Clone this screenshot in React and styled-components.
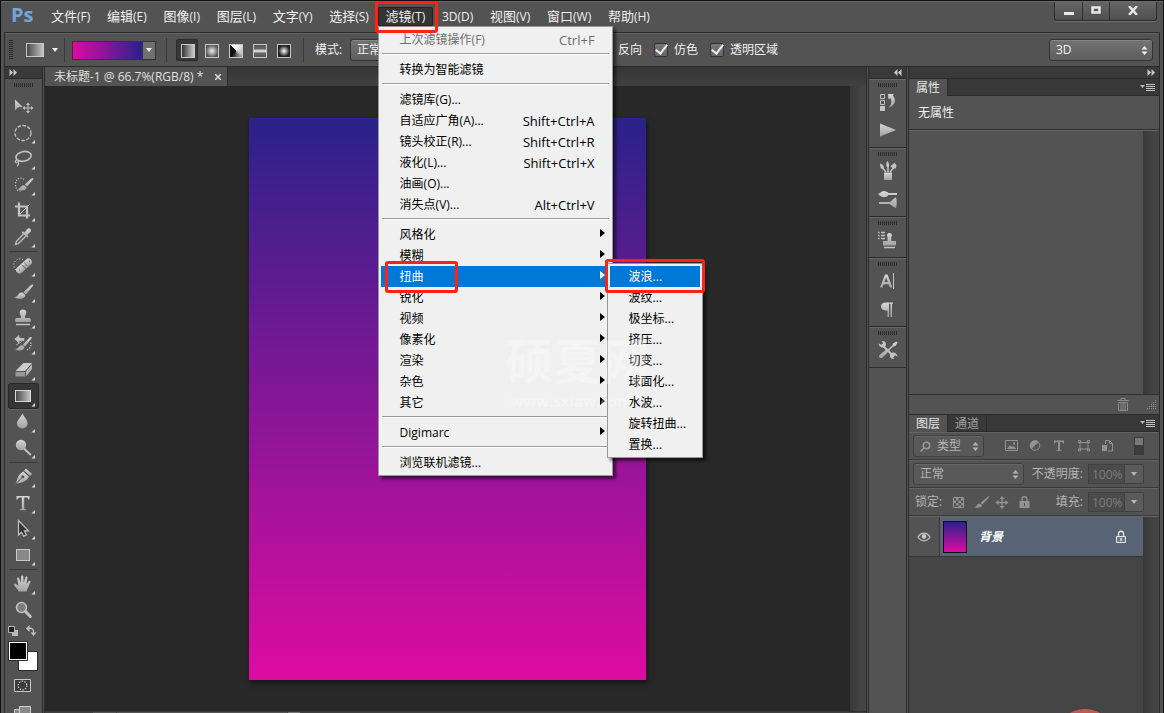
import styled, { createGlobalStyle, css } from "styled-components"

const GlobalStyle = createGlobalStyle`
    * {
        box-sizing: border-box;
    }
    body {
        margin: 0;
        background: #535353;
        overflow: hidden;
    }
    body, button, input, select {
        font-family: "Open Sans", "Noto Sans CJK SC", sans-serif;
        font-size: 12px;
        line-height: 16px;
    }
    button {
        border: 0;
        padding: 0;
        background: none;
        color: inherit;
    }
    svg {
        display: block;
    }
`

const MENUS = [
    ["文件", "(F)"], ["编辑", "(E)"], ["图像", "(I)"], ["图层", "(L)"], ["文字", "(Y)"], ["选择", "(S)"],
    ["滤镜", "(T)"], ["", "3D(D)"], ["视图", "(V)"], ["窗口", "(W)"], ["帮助", "(H)"],
]

const FILTER_MENU = [
    [{ label: "上次滤镜操作(F)", keys: "Ctrl+F", off: true }],
    [{ label: "转换为智能滤镜" }],
    [
        { label: "滤镜库(G)..." },
        { label: "自适应广角(A)...", keys: "Shift+Ctrl+A" },
        { label: "镜头校正(R)...", keys: "Shift+Ctrl+R" },
        { label: "液化(L)...", keys: "Shift+Ctrl+X" },
        { label: "油画(O)..." },
        { label: "消失点(V)...", keys: "Alt+Ctrl+V" },
    ],
    ["风格化", "模糊", "扭曲", "锐化", "视频", "像素化", "渲染", "杂色", "其它"].map((label) => ({ label, sub: true })),
    [{ label: "Digimarc", sub: true }],
    [{ label: "浏览联机滤镜..." }],
]

const DISTORT = ["波浪...", "波纹...", "极坐标...", "挤压...", "切变...", "球面化...", "水波...", "旋转扭曲...", "置换..."]

const TOOLS = [
    ["move", "marquee", "lasso", "quick", "crop", "dropper"],
    ["heal", "brush", "stamp", "history", "eraser", "gradient", "blur", "dodge"],
    ["pen", "type", "select", "rect"],
    ["hand", "zoom"],
]

const DOCK = [["historyPanel", "play"], ["brushes", "brushPresets"], ["cloneSource"], ["character", "paragraph"], ["toolPresets"]]

const GRADIENT_STYLES = [
    "linear-gradient(90deg, #333, #ccc)",
    "radial-gradient(#eee, #555 75%)",
    "conic-gradient(from -45deg, #fff 10%, #bbb 45%, #111 75%)",
    "linear-gradient(#555, #666 30%, #eee 50%, #666 70%, #555)",
    "radial-gradient(#fff, #222 65%)",
]

const M = "url(#metal)"
const C = "#c2c2c2"

const icons = {
    move: (
        <>
            <path d="M4 4.500v11l3.200-3.200 4.800-.3z" fill={M} />
            <path d="M17 8.500v9M12.500 13h9" stroke={C} />
            <path d="M17 7.500l2 2.500h-4zM17 18.500l2-2.500h-4zM11.500 13l2.500-2v4zM22.500 13l-2.500-2v4z" fill={C} />
        </>
    ),
    marquee: <ellipse cx="12" cy="12" rx="8" ry="7.500" fill="none" stroke={C} strokeWidth="1.300" strokeDasharray="3.600 1.500" />,
    lasso: (
        <>
            <ellipse cx="12.500" cy="9.500" rx="7.700" ry="4.800" transform="rotate(-12 12 9)" fill="none" stroke={C} strokeWidth="1.600" />
            <path d="M6 13.500c-1.500-.5-2.500 1-1 2 2 .8 3-.8 1.500-1.800M7 15.500c1.500 1 0 3-1 3.500" fill="none" stroke={C} strokeWidth="1.200" />
        </>
    ),
    quick: (
        <>
            <path d="M13 6.500C10 3.500 4.500 5.500 4.500 11.500c0 4 2 6.500 5 6.500" fill="none" stroke={C} strokeWidth="1.200" strokeDasharray="1.200 1.400" />
            <path d="M21.500 5c1 .3 1.200 1 .6 1.500l-6 7-2.400-2 6-5.600zM13 12.300l2.500 2c0 2.500-2.500 3.200-4.500 3.200-1.500 0-3-.4-4-1.500 2.500-.5 3-4 6-3.700z" fill={M} />
        </>
    ),
    crop: (
        <>
            <path d="M8 3.500v13h11M4 7.500h12v12" fill="none" stroke={C} strokeWidth="2.200" />
            <path d="M8.500 15.500L18.500 5.500" stroke={C} />
        </>
    ),
    dropper: (
        <>
            <path d="M12.500 9l-7 7.300-1 3.200 3-1 7.200-7.200" fill="none" stroke={C} strokeWidth="1.300" />
            <path d="M10.500 7.500l1.300-1.300 1.500 1.200 3-3.400c2-2 5 .8 3.200 2.900l-3.200 3.100 1.300 1.500-1.300 1.300z" fill={M} />
        </>
    ),
    heal: (
        <>
            <path d="M12 5.500C8.500 3.500 3 6 2.800 10.500c0 3 1 5 2.700 6" fill="none" stroke={C} strokeDasharray="1.200 1.600" />
            <rect x="3.500" y="8.500" width="19" height="7" rx="3.500" transform="rotate(-42 13 12)" fill={M} />
            <path d="M10.500 11l4.500 4M13 8.500l4.500 4.200" stroke="#777" />
            <path d="M12.500 12h1M14.500 11h1M13.500 13.500h1M18 7.500h1M8 16h1" stroke="#666" />
        </>
    ),
    brush: (
        <>
            <path d="M21.500 4.500c.8.2.9.8.4 1.500l-7 8.500-2.600-2.200 7.800-7.400z" fill={M} />
            <path d="M11.800 12.800l2.500 2.200c0 2.500-2.500 3.800-5.300 3.800-2.200 0-4.200-.5-5.700-1.800 2.500-.2 3-1.200 4-2.500 1-1.400 2.700-2.400 4.500-1.700z" fill={M} />
        </>
    ),
    stamp: (
        <>
            <path d="M12 3.500c2.200 0 3.500 1.400 3.300 3.200-.2 2-1.500 2.600-1.300 5.300h4c1.200 0 1.700.6 1.700 1.500V16H4.300v-2.500c0-.9.500-1.500 1.700-1.500h4c.2-2.700-1.100-3.300-1.300-5.300C8.500 4.900 9.800 3.500 12 3.500z" fill={M} />
            <path d="M5 18.500h14" stroke={C} strokeWidth="1.500" />
        </>
    ),
    history: (
        <>
            <path d="M20 5c.9.200 1 .9.500 1.500l-6.500 8-2.200-1.800 7-7.400zM11.200 13.200l2.300 1.900c0 2.400-2.300 3.400-4.700 3.400-1.800 0-3.500-.4-4.600-1.500 4-.6 3.500-4 7-3.800z" fill={M} />
            <path d="M4 7.500c2-1.500 4-1.500 6.500-.5" fill="none" stroke={C} strokeWidth="1.800" />
            <path d="M4 7l4-3.500v3h5v2H8v2.500zM5 13l6-3.500" stroke={C} fill={C} strokeWidth=".8" />
            <path d="M19.500 10.500c1.500 3-.5 6.500-4 7.500" fill="none" stroke={C} strokeDasharray="1.300 1.300" strokeWidth="1.300" />
        </>
    ),
    eraser: (
        <>
            <path d="M12.500 5h8.500l-7 8H4.500z" fill="#ccc" />
            <path d="M4.500 14H14v4.500H4.500z" fill="#999" />
            <path d="M15 13.500l6-7.500v5l-6 7.500z" fill="#b5b5b5" />
        </>
    ),
    gradient: <rect x="4.500" y="6.500" width="15" height="11" fill="url(#ramp)" stroke="#d8d8d8" />,
    blur: <path d="M11.500 3.500c1.600 3.600 5 6.400 5 9.800 0 3-2.200 5.200-5.200 5.200s-5.200-2.200-5.200-5.200c0-3.400 3.800-6.200 5.400-9.800z" fill={M} />,
    dodge: (
        <>
            <circle cx="10" cy="9" r="5.200" fill={M} />
            <path d="M13.500 13l5.800 5.500" stroke={C} strokeWidth="2" strokeLinecap="round" />
        </>
    ),
    pen: (
        <>
            <path d="M15 3.500l6 5.500-2 2-6-5.500z" fill={M} />
            <path d="M12.300 6.500l5.700 5.300c-2 3.500-5 5.700-13.500 7.200C6.500 13.500 7 9.500 12.300 6.500z" fill={M} />
            <path d="M4.500 19l6.500-6.500" stroke="#555" />
            <circle cx="11.800" cy="11.800" r="1.500" fill="#555" />
        </>
    ),
    type: <path d="M5.500 5h13v3.500h-1.200c-.3-1.600-.9-2.100-2.600-2.100h-1.500V17c0 1 .4 1.300 1.800 1.300v.9H9v-.9c1.400 0 1.800-.3 1.800-1.300V6.400H9.300c-1.700 0-2.300.5-2.600 2.100H5.500z" fill={M} />,
    select: <path d="M7.500 3.500v14.500l3-2.800 2.200 4 2.700-1.300-2-4h4.100z" fill="#333" stroke={C} strokeWidth="1.200" />,
    rect: <rect x="5.500" y="6.500" width="13" height="11" fill="#888" stroke="#c8c8c8" />,
    hand: <path d="M7.500 19.500c-.3-2.300-3.700-4.700-4.300-6.500-.2-1 1-1.500 1.800-1l2.500 1.800L6.200 7c-.2-1.500 1.500-2 2-.6l1.500 4.300.5-6.200c.1-1.400 2-1.400 2.100 0l.4 6.200 1.700-5.400c.5-1.300 2.200-.8 2 .6L15.500 12l2.200-2.700c.9-1 2.400-.2 1.700 1-1.300 2.200-1.500 4-2.500 6-.6 1.200-1 2-1.100 3.200z" fill={M} />,
    zoom: (
        <>
            <circle cx="10.500" cy="9.500" r="5" fill="#7d7d7d" stroke={C} strokeWidth="1.500" />
            <path d="M14.500 13.500l4.800 5" stroke={C} strokeWidth="3" strokeLinecap="round" />
        </>
    ),
    historyPanel: (
        <>
            <path d="M4.500 4.500h4v4h-4zM4.500 10.500h4v4h-4z" fill="none" stroke={C} />
            <path d="M4 16h5v5H4z" fill={C} />
            <path d="M12 4h6l-1.200 1.500c3.500 3.500 3 9.500-4.300 12.500 3.500-4 3.500-7 1.700-10L12.500 9.500z" fill={M} />
        </>
    ),
    play: <path d="M4 5.500v13l16-6.500z" fill={M} />,
    brushes: (
        <>
            <path d="M8 13.500h8V21H8z" fill={M} />
            <path d="M10 13L6.500 9M12 13V6M14 13l4-4.500" stroke={C} strokeWidth="1.500" />
            <path d="M4 4.500c3 .5 4 2.500 4 5L5.500 10C4.500 8.500 4 7 4 4.500zM11.500 2c1.500 1.500 2 4 1.300 6h-2c-1-2-.7-4.500.7-6zM14.500 7l4-3c2 1 2.300 3 1.500 5-1.500 1-3.500.8-5.500-2z" fill={C} />
        </>
    ),
    brushPresets: (
        <path d="M2 7c2 0 2.500-3 6-3 2 0 3.500 1 4.500 2H21v2h-8.500c-3 3.500-7.500 2.500-10.500-1zM3 15h10.500c1.500 0 3-3 6.500-4.500 1 3 1 7.500 0 10.500-3.500-1-5-3.500-6.500-4H3z" fill={M} />
    ),
    cloneSource: (
        <>
            <path d="M2 4.500h1.500M5 4.500h4M2 7.500h1.500M5 7.500h4M2 10.500h1.500M5 10.500h4" stroke={C} strokeWidth="1.500" />
            <path d="M13.500 5c2.500 0 3 2.500 1.800 4.300V13H20v4.500H7V13h4.500V9.300C10.500 7.500 11 5 13.500 5z" fill={M} />
            <path d="M8 19.500h11" stroke={C} strokeWidth="1.500" />
        </>
    ),
    character: (
        <>
            <path d="M4 18.500L9 5.500h2.500l5 13h-2.700l-1.200-3.300H7.800L6.600 18.500zM8.500 13h3.300l-1.600-4.700z" fill={M} />
            <path d="M17.500 4v16" stroke={C} />
        </>
    ),
    paragraph: <path d="M10 5.500h7v1.300h-1V20h-1.500V6.800h-1.500V20h-1.500v-6.500c-4 .2-6.500-1.400-6.500-4 0-2.500 2-4 5-4z" fill={M} />,
    toolPresets: (
        <>
            <path d="M6.500 7.500L18 18.500" stroke={C} strokeWidth="2.200" />
            <path d="M2.500 5.500l2.800 1.300L7 5.500 6 3c2.500-.5 4.500 1.500 4 4-.5 2-3 3-5 2-1.500-.5-2.300-2-2.500-3.500zM21.500 18.500l-2.800-1.300-1.700 1.300 1 2.500c-2.500.5-4.500-1.500-4-4 .5-2 3-3 5-2 1.500.5 2.300 2 2.500 3.500z" fill={C} />
            <path d="M20 5L5.500 18.500" stroke={C} strokeWidth="1.500" />
            <path d="M17 5.500l3.500-2 1 1-2 3.500-2 .5-1-1zM11.500 10.500l2 2-7 7c-2 1.500-4.500-.5-3-2.500z" fill={M} />
        </>
    ),
}

function Icon({ name, corner }) {
    return (
        <svg width="24" height="24" viewBox="0 0 24 24" fill="none" aria-hidden="true">
            {icons[name]}
            {corner && <path d="M24 19v3.500h-3.500z" fill="#ddd" />}
        </svg>
    )
}

function Chevrons({ left }) {
    return (
        <svg width="8" height="7" viewBox="0 0 8 7" fill="#c8c8c8" aria-hidden="true">
            {left ? <path d="M3.500 0v7L0 3.500zM7.500 0v7L4 3.500z" /> : <path d="M.5 0v7L4 3.500zM4.500 0v7L8 3.500z" />}
        </svg>
    )
}

function Arrows() {
    return (
        <svg width="7" height="9" viewBox="0 0 7 9" fill="currentColor" aria-hidden="true">
            <path d="M.5 3.500h6L3.500 0zM.5 5.500h6l-3 3.500z" />
        </svg>
    )
}

function DownArrow() {
    return (
        <svg width="6" height="4" viewBox="0 0 6 4" fill="currentColor" aria-hidden="true">
            <path d="M0 0h6L3 4z" />
        </svg>
    )
}

function FlyoutIcon() {
    return (
        <svg width="15" height="9" viewBox="0 0 15 9" aria-hidden="true">
            <path d="M0 2h5L2.500 5z" fill="#bbb" />
            <path d="M6 1.500h9M6 3.500h9M6 5.500h9M6 7.500h9" stroke="#c4c4c4" />
        </svg>
    )
}

function LockIcon() {
    return (
        <svg width="12" height="14" viewBox="0 0 12 14" aria-hidden="true">
            <path d="M3.500 6V3.500C3.500.500 8.500.500 8.500 3.500V6" fill="none" stroke="currentColor" strokeWidth="1.300" />
            <path d="M1.500 6.500h9v6h-9z" fill="#ffffff22" stroke="currentColor" />
            <path d="M6 8v3" stroke="currentColor" strokeWidth="1.500" />
        </svg>
    )
}

function DropDown({ label, value, icon, dim }) {
    return (
        <SelectBox $dim={dim}>
            {icon}
            <select aria-label={label} defaultValue={value}>
                <option>{value}</option>
            </select>
            <Arrows />
        </SelectBox>
    )
}

function Percent({ label, id }) {
    return (
        <PercentBox>
            <label htmlFor={id}>{label}</label>
            <input id={id} defaultValue="100%" />
            <button type="button" aria-label={label}><DownArrow /></button>
        </PercentBox>
    )
}

function CheckBox({ label }) {
    return (
        <CheckLabel>
            <input type="checkbox" defaultChecked />
            {label}
        </CheckLabel>
    )
}

function FilterDropdown() {
    return (
        <Menu role="menu">
            {FILTER_MENU.map((group, i) => (
                <MenuGroup key={i}>
                    {group.map((item) => {
                        const active = item.label === "扭曲"
                        return (
                            <MenuRow key={item.label}>
                                <MenuButton type="button" role="menuitem" $active={active} $off={item.off}>
                                    <span>{item.label}</span>
                                    {item.keys && <Keys>{item.keys}</Keys>}
                                    {item.sub && (
                                        <svg width="5" height="8" viewBox="0 0 5 8" fill="currentColor"><path d="M0 0l5 4-5 4z" /></svg>
                                    )}
                                </MenuButton>
                                {active && <RowMark />}
                                {active && <DistortMenu />}
                            </MenuRow>
                        )
                    })}
                </MenuGroup>
            ))}
            <Watermark aria-hidden="true">
                <b>硕夏网</b>
                <span>www.sxiaw.com</span>
            </Watermark>
        </Menu>
    )
}

function DistortMenu() {
    return (
        <SubMenu role="menu">
            {DISTORT.map((label, i) => (
                <MenuRow key={label}>
                    <MenuButton type="button" role="menuitem" $active={i === 0}>{label}</MenuButton>
                    {i === 0 && <SubMark />}
                </MenuRow>
            ))}
        </SubMenu>
    )
}

function TitleBar() {
    return (
        <Title>
            <Logo>Ps</Logo>
            <MenuBar>
                {MENUS.map(([name, key]) => (
                    <MenuItem key={key}>
                        <MenuTitle type="button" $open={name === "滤镜"}>{name}<span>{key}</span></MenuTitle>
                        {name === "滤镜" && <FilterDropdown />}
                        {name === "滤镜" && <TitleMark />}
                    </MenuItem>
                ))}
            </MenuBar>
            <WindowButtons>
                <button type="button" aria-label="最小化">
                    <svg width="10" height="12"><path d="M0 8h10v3H0z" fill="#e8e8e8" /></svg>
                </button>
                <button type="button" aria-label="最大化">
                    <svg width="10" height="8"><path d="M1.500 1.500h7v5h-7z" fill="none" stroke="#e8e8e8" strokeWidth="2.500" /></svg>
                </button>
                <button type="button" aria-label="关闭">
                    <svg width="10" height="9"><path d="M1 0l8 9M9 0L1 9" stroke="#e8e8e8" strokeWidth="2.500" /></svg>
                </button>
            </WindowButtons>
        </Title>
    )
}

function OptionsBar() {
    return (
        <Options>
            <SideGrip />
            <Preset type="button" aria-label="工具预设">
                <svg width="18" height="14"><rect x=".5" y=".5" width="17" height="13" fill="url(#ramp)" stroke="#c8c8c8" /></svg>
                <DownArrow />
            </Preset>
            <Divider />
            <GradientPicker type="button" aria-label="渐变">
                <i />
                <span><DownArrow /></span>
            </GradientPicker>
            <Divider />
            <Styles>
                {GRADIENT_STYLES.map((fill, i) => (
                    <StyleButton key={fill} type="button" aria-label={"渐变样式" + (i + 1)} $fill={fill} $active={i === 0} />
                ))}
            </Styles>
            <Divider />
            <ModeLabel>模式:</ModeLabel>
            <ModeSlot><DropDown label="模式" value="正常" /></ModeSlot>
            <Checks>
                <CheckBox label="反向" />
                <CheckBox label="仿色" />
                <CheckBox label="透明区域" />
            </Checks>
            <Workspace><DropDown label="工作区" value="3D" /></Workspace>
        </Options>
    )
}

function ToolPanel() {
    return (
        <Tools>
            <DockHead><Chevrons /></DockHead>
            <GripRow><Grip /></GripRow>
            {TOOLS.map((group) => (
                <ToolGroup key={group[0]}>
                    {group.map((name) => (
                        <Tool key={name} type="button" aria-label={name} $active={name === "gradient"}>
                            <Icon name={name} corner={name !== "move" && name !== "zoom"} />
                        </Tool>
                    ))}
                </ToolGroup>
            ))}
            <svg width="36" height="90" viewBox="5 623 36 90" aria-hidden="true">
                <path d="M12 630h6v6h-6z" fill="#bbb" />
                <path d="M8.500 626.500h6v6h-6z" fill="#222" stroke="#bbb" />
                <path d="M28 628.500c4-1 6 1 5.500 4.500" fill="none" stroke="#c2c2c2" strokeWidth="1.300" />
                <path d="M26 628.500l3.500-3.500v7zM33.500 636l-3-3.500h6z" fill="#c2c2c2" />
                <path d="M18.500 651.500h19v19h-19z" fill="#fff" stroke="#2a2a2a" />
                <path d="M8.500 641.500h19v19h-19z" fill="#fff" stroke="#2a2a2a" />
                <path d="M10 643h16v16H10z" fill="#000" />
                <path d="M14.500 679.500h16v12h-16z" fill="#3c3c3c" stroke="#c8c8c8" />
                <circle cx="22.500" cy="685.500" r="4.300" fill="none" stroke="#ddd" strokeDasharray="1.300 1.400" strokeWidth="1.200" />
                <path d="M14.500 709.500h6v6h-6z" fill="#888" stroke="#c8c8c8" />
                <path d="M19.500 706.500h11v10h-11z" fill="#888" stroke="#d0d0d0" />
            </svg>
        </Tools>
    )
}

function DocumentArea() {
    return (
        <Document>
            <DocTabs>
                <DocTab>
                    未标题-1 @ 66.7%(RGB/8) *
                    <button type="button" aria-label="关闭文档">
                        <svg width="6" height="6"><path d="M0 0l6 6M6 0L0 6" stroke="#ddd" strokeWidth="1.500" /></svg>
                    </button>
                </DocTab>
            </DocTabs>
            <Stage>
                <Canvas><Artboard /></Canvas>
                <Scroll />
            </Stage>
            <StatusBar><i /><i /><i /></StatusBar>
        </Document>
    )
}

function Properties() {
    return (
        <Panel $grow={335}>
            <PanelTabs>
                <PanelTab type="button" $active>属性</PanelTab>
                <Flyout type="button" aria-label="属性菜单"><FlyoutIcon /></Flyout>
            </PanelTabs>
            <PanelNote>无属性</PanelNote>
            <PanelBody $bg="#535353"><div /><Scroll /></PanelBody>
            <PanelFoot>
                <button type="button" aria-label="删除">
                    <svg width="12" height="13" fill="none" stroke="#8b8b8b">
                        <path d="M.5 2.500h11M4 2V.500h4V2M1.500 4.500h9v8h-9zM4 5v7M6 5v7M8 5v7" />
                    </svg>
                </button>
                <svg width="10" height="10" stroke="#8b8b8b" strokeDasharray="1 1">
                    <path d="M8 1.500h2M6 3.500h4M4 5.500h6M2 7.500h8M0 9.500h10" />
                </svg>
            </PanelFoot>
        </Panel>
    )
}

function Layers() {
    return (
        <Panel $grow={298}>
            <PanelTabs>
                <PanelTab type="button" $active>图层</PanelTab>
                <PanelTab type="button">通道</PanelTab>
                <Flyout type="button" aria-label="图层菜单"><FlyoutIcon /></Flyout>
            </PanelTabs>
            <PanelRow>
                <FilterSlot>
                    <DropDown
                        label="筛选"
                        value="类型"
                        dim
                        icon={<svg width="11" height="11" fill="none" stroke="#999" strokeWidth="1.500"><circle cx="6.500" cy="4.500" r="3.200" /><path d="M4 7L.500 10.500" /></svg>}
                    />
                </FilterSlot>
                <FilterIcons viewBox="0 0 108 16" aria-hidden="true">
                    <path d="M.5 2.500h12v10H.5z" stroke="#929292" fill="none" />
                    <path d="M2 11l3-4 2 2 1.500-1 3 3zM8 4.500h2v2H8z" fill="#929292" />
                    <circle cx="30" cy="7.500" r="4.800" stroke="#929292" fill="none" />
                    <path d="M26.500 11A4.800 4.800 0 0 1 33.500 4z" fill="#929292" />
                    <path d="M49 2.500h10v3h-1c-.2-1.200-.8-1.500-2-1.500h-1v7.500c0 .6.500.8 1.500.8v.7h-5v-.7c1 0 1.500-.2 1.500-.8V4h-1c-1.200 0-1.800.3-2 1.500h-1z" fill="#929292" />
                    <path d="M75 4.500h8v6.500h-8zM73.500 2.500h2v2h-2zM82.500 2.500h2v2h-2zM73.500 11h2v2h-2zM82.500 11h2v2h-2z" stroke="#929292" fill="none" />
                    <path d="M100.500 6V2.500h4l3 3v7.500H103M104.500 2.500v3h3" stroke="#929292" fill="none" />
                    <path d="M97 7h5v6h-5z" fill="#929292" />
                </FilterIcons>
                <Toggle type="button" aria-label="启用筛选" />
            </PanelRow>
            <PanelRow>
                <BlendSlot><DropDown label="混合模式" value="正常" dim /></BlendSlot>
                <Percent label="不透明度:" id="opacity" />
            </PanelRow>
            <PanelRow>
                <LockLabel>锁定:</LockLabel>
                <LockIcons viewBox="0 0 80 16" aria-hidden="true">
                    <path d="M.5 3.500h10v10H.5z" fill="none" stroke="#929292" />
                    <path d="M3 4h2.500v2.500H3zM8 4h2.500v2.500H8zM1 6.500h2V9H1zM5.500 6.500H8V9H5.500zM3 9h2.500v2.500H3zM8 9h2.500v2.500H8zM5.500 11.500H8V13H5.500z" fill="#929292" />
                    <g fill="#929292">
                        <path d="M36.500 2l-1 2-6 6.500-2-1.700 7.500-6.300zM27 9.500l2 1.700c0 2.300-3.500 2.800-7.500 2.300 2.500-1 2.500-4.500 5.500-4z" />
                        <path d="M49 2l2.500 3h-5zM49 15l2.500-3h-5zM42.500 8.500l3-2.500v5zM55.500 8.500l-3-2.500v5z" />
                        <path d="M66.500 7h10v7h-10z" />
                    </g>
                    <path d="M49 4v9M44.500 8.500h9M69 7V5c0-3 5-3 5 0v2" fill="none" stroke="#929292" strokeWidth="1.300" />
                    <path d="M71.500 9v3" stroke="#535353" />
                </LockIcons>
                <Percent label="填充:" id="fill" />
            </PanelRow>
            <PanelBody $bg="#454545">
                <LayerList>
                    <Layer>
                        <Eye type="button" aria-label="显示图层">
                            <svg width="14" height="10" fill="none" stroke="#bcbcbc">
                                <path d="M1 5c3-5 9-5 12 0-3 5-9 5-12 0z" strokeWidth="1.300" />
                                <circle cx="7" cy="4.500" r="2" fill="#ccc" />
                            </svg>
                        </Eye>
                        <LayerBody>
                            <Thumb />
                            <em>背景</em>
                            <LockIcon />
                        </LayerBody>
                    </Layer>
                </LayerList>
                <Scroll />
            </PanelBody>
        </Panel>
    )
}

export default function App() {
    return (
        <Window>
            <GlobalStyle />
            <Defs aria-hidden="true">
                <linearGradient id="metal" x2="0" y2="1">
                    <stop stopColor="#d6d6d6" />
                    <stop offset="1" stopColor="#a2a2a2" />
                </linearGradient>
                <linearGradient id="ramp">
                    <stop stopColor="#444" />
                    <stop offset="1" stopColor="#c8c8c8" />
                </linearGradient>
            </Defs>
            <TitleBar />
            <Frame>
                <OptionsBar />
                <Main>
                    <ToolPanel />
                    <DocumentArea />
                    <IconDock>
                        <DockHead $end><Chevrons left /></DockHead>
                        {DOCK.map((group) => (
                            <DockGroup key={group[0]}>
                                <Grip />
                                {group.map((name) => (
                                    <DockButton key={name} type="button" aria-label={name}><Icon name={name} /></DockButton>
                                ))}
                            </DockGroup>
                        ))}
                    </IconDock>
                    <Panels>
                        <DockHead $end><Chevrons /></DockHead>
                        <Properties />
                        <Layers />
                    </Panels>
                </Main>
            </Frame>
            <Bubble />
        </Window>
    )
}

const Window = styled.div`
    height: 100vh;
    display: flex;
    flex-direction: column;
    border: 1px solid #101010;
    border-bottom: 0;
    background: #535353;
    color: #f0f0f0;
    overflow: hidden;
    position: relative;
`

const Defs = styled.svg`
    position: absolute;
    width: 0;
    height: 0;
`

const Title = styled.header`
    display: flex;
    align-items: flex-start;
    height: 31px;
    flex: none;
    border-top: 1px solid #6a6a6a;
`

const Logo = styled.div`
    width: 42px;
    padding-left: 10px;
    color: #76a3d6;
    font: bold 20px/26px "Open Sans", sans-serif;
`

const MenuBar = styled.nav`
    display: flex;
    justify-content: space-between;
    width: 615px;
    padding-top: 5px;
`

const MenuItem = styled.div`
    position: relative;
`

const MenuTitle = styled.button`
    display: block;
    height: 19px;
    padding: 0 8px;
    font-size: 13px;
    line-height: 18px;
    white-space: nowrap;
    border-radius: 2px;
    background: ${(p) => (p.$open ? "#343434" : "none")};
    box-shadow: ${(p) => (p.$open ? "inset 0 0 0 1px #222" : "none")};
    & span {
        font-size: 12px;
    }
`

const menuBox = css`
    position: absolute;
    padding: 2px;
    background: #f0f0f0;
    border: 1px solid #999;
    box-shadow: 3px 3px 3px rgba(0, 0, 0, 0.55);
    color: #000;
`

const Menu = styled.div`
    ${menuBox}
    top: 100%;
    left: 0;
    width: 235px;
    z-index: 10;
`

const SubMenu = styled.div`
    ${menuBox}
    top: -3px;
    left: calc(100% - 3px);
    width: 96px;
`

const MenuGroup = styled.div`
    & + &::before {
        content: "";
        display: block;
        height: 1px;
        margin: 3px 1px 5px;
        background: #9b9b9b;
        box-shadow: 0 1px 0 #fff;
    }
`

const MenuRow = styled.div`
    position: relative;
`

const MenuButton = styled.button`
    display: flex;
    align-items: center;
    justify-content: space-between;
    width: 100%;
    height: 21px;
    padding: 0 5px 0 19px;
    text-align: left;
    white-space: nowrap;
    background: ${(p) => (p.$active ? "#0078d7" : "none")};
    color: ${(p) => (p.$active ? "#fff" : p.$off ? "#6d6d6d" : "#000")};
    & svg {
        margin-bottom: 4px;
    }
`

const Keys = styled.span`
    font-size: 13px;
    padding-right: 10px;
`

const Mark = styled.i`
    position: absolute;
    border: 3px solid #ff2314;
    border-radius: 3px;
    pointer-events: none;
    z-index: 12;
`

const TitleMark = styled(Mark)`
    inset: -6px -5px -7px -3px;
`

const RowMark = styled(Mark)`
    top: -5px;
    left: 4px;
    width: 73px;
    height: 32px;
`

const SubMark = styled(Mark)`
    inset: -7px -5px -6px -5px;
`

const Watermark = styled.div`
    position: absolute;
    left: 127px;
    top: 306px;
    display: flex;
    flex-direction: column;
    white-space: nowrap;
    color: rgba(255, 255, 255, 0.3);
    pointer-events: none;
    z-index: 11;
    & b {
        font-size: 48px;
        line-height: 56px;
    }
    & span {
        font-size: 15px;
        font-weight: bold;
        line-height: 24px;
        padding-left: 5px;
    }
`

const WindowButtons = styled.div`
    display: flex;
    height: 19px;
    margin: 0 6px 0 auto;
    border: 1px solid #2c2c2c;
    border-top: 0;
    border-radius: 0 0 3px 3px;
    box-shadow: 0 1px 0 #707070;
    background: linear-gradient(#656565, #505050);
    & button {
        display: flex;
        align-items: center;
        justify-content: center;
        width: 27px;
        height: 16px;
    }
    & button + button {
        height: 18px;
        padding-bottom: 2px;
        border-left: 1px solid #2c2c2c;
    }
    & button:last-child {
        width: 47px;
    }
`

const Frame = styled.div`
    flex: 1;
    min-height: 0;
    margin: 0 3px;
    display: flex;
    flex-direction: column;
    border: 1px solid #2b2b2b;
    border-bottom: 0;
`

const Options = styled.div`
    display: flex;
    align-items: center;
    height: 33px;
    flex: none;
    padding: 0 6px 0 4px;
    border-top: 1px solid #656565;
`

const SideGrip = styled.div`
    width: 4px;
    height: 20px;
    background: repeating-linear-gradient(#2c2c2c 0 1px, #535353 1px 2px);
`

const Preset = styled.button`
    display: flex;
    align-items: center;
    gap: 8px;
    margin: 0 6px 0 13px;
`

const Divider = styled.div`
    width: 1px;
    height: 24px;
    background: #3a3a3a;
`

const GradientPicker = styled.button`
    display: flex;
    height: 19px;
    margin: 0 10px 0 7px;
    border: 1px solid #333;
    & i {
        width: 69px;
        height: 17px;
        background: linear-gradient(90deg, #de0ba2, #2a2289);
    }
    & span {
        display: flex;
        align-items: center;
        justify-content: center;
        width: 13px;
        height: 17px;
        border-left: 1px solid #333;
        background: #707070;
    }
`

const Styles = styled.div`
    display: flex;
    gap: 2px;
    margin: 0 9px;
`

const StyleButton = styled.button`
    width: 22px;
    height: 22px;
    padding: 5px;
    border-radius: 2px;
    background: ${(p) => (p.$active ? "#383838" : "none")};
    box-shadow: ${(p) => (p.$active ? "inset 0 0 0 1px #2a2a2a" : "none")};
    &::before {
        content: "";
        display: block;
        width: 12px;
        height: 12px;
        border: 1px solid #c8c8c8;
        background: ${(p) => p.$fill};
    }
`

const ModeLabel = styled.span`
    width: 46px;
    padding-left: 11px;
    white-space: nowrap;
`

const ModeSlot = styled.div`
    width: 150px;
`

const Checks = styled.div`
    display: flex;
    gap: 12px;
    margin-left: 98px;
`

const CheckLabel = styled.label`
    display: flex;
    align-items: center;
    gap: 6px;
    white-space: nowrap;
    & input {
        appearance: none;
        width: 14px;
        height: 14px;
        margin: 0;
        border: 1px solid #333;
        border-radius: 2px;
        background: linear-gradient(#777, #666);
        display: grid;
        place-items: center;
    }
    & input:checked::before {
        content: "";
        width: 5px;
        height: 10px;
        margin-top: -5px;
        border: solid #f0f0f0;
        border-width: 0 2px 2px 0;
        transform: rotate(38deg);
    }
`

const Workspace = styled.div`
    width: 104px;
    margin-left: auto;
`

const SelectBox = styled.div`
    display: flex;
    align-items: center;
    height: 22px;
    padding-right: 4px;
    border: 1px solid ${(p) => (p.$dim ? "#404040" : "#333")};
    border-radius: 3px;
    color: ${(p) => (p.$dim ? "#b4b4b4" : "#f0f0f0")};
    background: ${(p) => (p.$dim ? "#595959" : "linear-gradient(#737373, #5e5e5e)")};
    box-shadow: inset 0 1px 0 ${(p) => (p.$dim ? "#666" : "#858585")};
    & > svg:first-child {
        margin-left: 6px;
    }
    & select {
        flex: 1;
        min-width: 0;
        appearance: none;
        border: 0;
        padding: 0 0 0 6px;
        background: none;
        color: inherit;
    }
`

const Main = styled.main`
    flex: 1;
    min-height: 0;
    display: flex;
    border-top: 1px solid #2b2b2b;
`

const DockHead = styled.div`
    display: flex;
    align-items: center;
    justify-content: ${(p) => (p.$end ? "flex-end" : "flex-start")};
    height: 12px;
    flex: none;
    padding: 0 4px;
    background: #393939;
    border-bottom: 1px solid #2b2b2b;
`

const Tools = styled.aside`
    width: 38px;
    flex: none;
    border-right: 1px solid #2b2b2b;
    overflow: hidden;
`

const Grip = styled.div`
    width: 20px;
    height: 4px;
    background: repeating-linear-gradient(90deg, #2c2c2c 0 1px, #535353 1px 2px);
`

const GripRow = styled.div`
    height: 15px;
    padding: 4px 9px;
`

const ToolGroup = styled.div`
    padding: 0 3px;
    & + &::before {
        content: "";
        display: block;
        height: 1px;
        margin: 1px;
        background: #3a3a3a;
    }
`

const Tool = styled.button`
    display: flex;
    align-items: center;
    width: 31px;
    height: 26px;
    padding-left: 3px;
    border-radius: 3px;
    background: ${(p) => (p.$active ? "#363636" : "none")};
    box-shadow: ${(p) => (p.$active ? "inset 0 0 0 1px #282828, 0 1px 0 #666" : "none")};
`

const Document = styled.section`
    flex: 1;
    min-width: 0;
    display: flex;
    flex-direction: column;
    margin-left: 1px;
    border-left: 1px solid #2b2b2b;
    border-right: 1px solid #2b2b2b;
`

const DocTabs = styled.div`
    height: 19px;
    flex: none;
    background: linear-gradient(#363636, #404040);
`

const DocTab = styled.div`
    display: inline-flex;
    align-items: center;
    gap: 12px;
    height: 19px;
    padding: 1px 6px 0 9px;
    background: #535353;
    border-right: 1px solid #2b2b2b;
    color: #e0e0e0;
    white-space: nowrap;
`

const Stage = styled.div`
    flex: 1;
    min-height: 0;
    display: flex;
    background: #282828;
`

const Canvas = styled.div`
    flex: 1;
    min-width: 0;
    display: flex;
    align-items: center;
    justify-content: center;
`

const Artboard = styled.div`
    width: 397px;
    height: 562px;
    background: linear-gradient(#2a2289, #de0ba2);
    box-shadow: 1px 3px 5px rgba(0, 0, 0, 0.5);
`

const Scroll = styled.div`
    width: 16px;
    flex: none;
    background: linear-gradient(90deg, #383838, #444 70%);
`

const StatusBar = styled.div`
    display: flex;
    gap: 1px;
    height: 2px;
    flex: none;
    padding-left: 48px;
    border-top: 1px solid #333;
    background: #404040;
    & i {
        width: 23px;
        background: #555;
    }
    & i:nth-child(2) {
        width: 170px;
    }
    & i:nth-child(3) {
        width: 12px;
        background: #777;
    }
`

const IconDock = styled.aside`
    width: 39px;
    flex: none;
    margin-left: 1px;
    border-left: 1px solid #2b2b2b;
    border-right: 1px solid #2b2b2b;
`

const DockGroup = styled.div`
    display: flex;
    flex-direction: column;
    align-items: center;
    padding: 3px 0 3px 1px;
    border-top: 1px solid #666;
    border-bottom: 1px solid #2b2b2b;
`

const DockButton = styled.button`
    display: flex;
    align-items: center;
    height: 28px;
    ${Grip} + & {
        margin-top: 1px;
    }
`

const Panels = styled.aside`
    width: 251px;
    flex: none;
    display: flex;
    flex-direction: column;
    margin-left: 1px;
    border-left: 1px solid #2b2b2b;
`

const Panel = styled.section`
    flex: ${(p) => p.$grow} 1 0;
    min-height: 0;
    display: flex;
    flex-direction: column;
    & + & {
        margin-top: 1px;
        border-top: 1px solid #2b2b2b;
    }
`

const PanelTabs = styled.div`
    display: flex;
    height: 17px;
    flex: none;
    background: #383838;
    border-bottom: 1px solid #2b2b2b;
`

const PanelTab = styled.button`
    height: 17px;
    padding: 0 7px;
    border-right: 1px solid #2b2b2b;
    background: ${(p) => (p.$active ? "#535353" : "none")};
    color: ${(p) => (p.$active ? "#e6e6e6" : "#a0a0a0")};
`

const Flyout = styled.button`
    margin: 0 4px 0 auto;
`

const PanelNote = styled.div`
    height: 34px;
    flex: none;
    padding: 9px;
    border-bottom: 1px solid #2f2f2f;
`

const PanelBody = styled.div`
    flex: 1;
    min-height: 0;
    display: flex;
    justify-content: space-between;
    background: ${(p) => p.$bg};
    border-top: 1px solid #666;
`

const PanelFoot = styled.div`
    display: flex;
    align-items: center;
    justify-content: flex-end;
    gap: 18px;
    height: 19px;
    flex: none;
    padding: 0 2px;
    border-top: 1px solid #2f2f2f;
`

const PanelRow = styled.div`
    display: flex;
    align-items: center;
    height: 28px;
    flex: none;
    padding: 0 15px 0 4px;
    border-bottom: 1px solid #3a3a3a;
    border-top: 1px solid #626262;
    color: #b4b4b4;
`

const FilterSlot = styled.div`
    width: 71px;
`

const BlendSlot = styled.div`
    width: 111px;
`

const FilterIcons = styled.svg`
    width: 108px;
    height: 16px;
    margin-left: 21px;
`

const LockIcons = styled.svg`
    width: 80px;
    height: 16px;
    margin-left: 9px;
`

const Toggle = styled.button`
    width: 10px;
    height: 18px;
    margin-left: auto;
    border: 1px solid #3a3a3a;
    background: linear-gradient(#777 45%, #3c3c3c 45%);
`

const LockLabel = styled.span`
    width: 31px;
    padding-left: 2px;
`

const PercentBox = styled.div`
    display: flex;
    align-items: center;
    margin-left: auto;
    & label {
        margin-right: 5px;
    }
    & input {
        width: 37px;
        height: 20px;
        padding: 0 0 0 3px;
        border: 1px solid #404040;
        border-radius: 0;
        background: #4b4b4b;
        color: #7c7c7c;
    }
    & button {
        display: flex;
        align-items: center;
        justify-content: center;
        width: 19px;
        height: 20px;
        border: 1px solid #404040;
        border-left: 0;
        border-radius: 0 2px 2px 0;
        background: #5b5b5b;
    }
`

const LayerList = styled.div`
    flex: 1;
`

const Layer = styled.div`
    display: flex;
    height: 40px;
    background: #535353;
    border-bottom: 1px solid #383838;
`

const Eye = styled.button`
    display: flex;
    align-items: center;
    justify-content: center;
    width: 31px;
    border-right: 1px solid #383838;
`

const LayerBody = styled.div`
    flex: 1;
    display: flex;
    align-items: center;
    padding: 0 16px 0 3px;
    background: #586475;
    color: #e6e6e6;
    & em {
        flex: 1;
        margin-left: 12px;
        color: #fff;
        font-weight: bold;
    }
`

const Thumb = styled.div`
    width: 24px;
    height: 32px;
    border: 1px solid #111;
    background: linear-gradient(#2a2289, #de0ba2);
`

const Bubble = styled.div`
    position: absolute;
    right: 48px;
    bottom: -56px;
    width: 60px;
    height: 60px;
    border-radius: 50%;
    background: #c05858;
`
